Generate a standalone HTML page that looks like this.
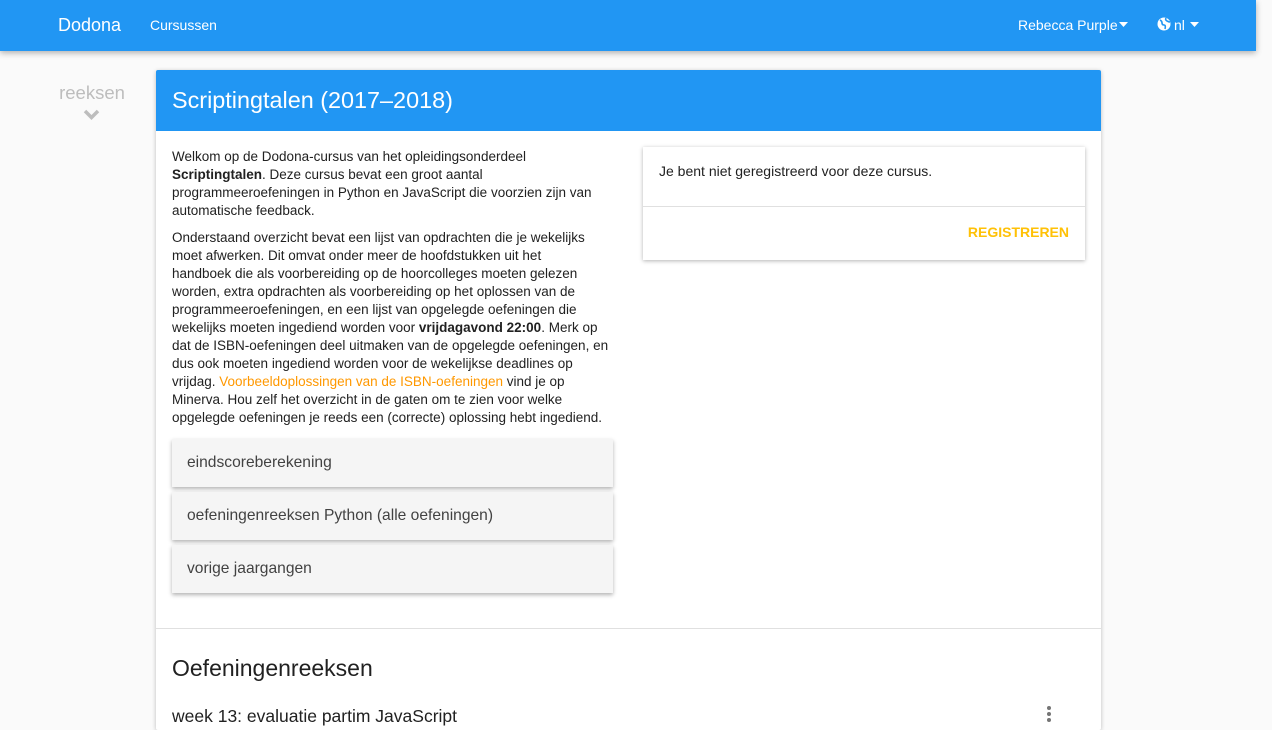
<!DOCTYPE html>
<html><head><meta charset="utf-8"><style>
*{box-sizing:border-box;margin:0;padding:0}
body{width:1272px;height:718px;overflow:hidden;background:#fafafa;font-family:"Liberation Sans",sans-serif;color:#212121;position:relative}
.nav{position:absolute;left:0;top:0;width:1256px;height:51px;background:#2196f3;box-shadow:0 2px 6px rgba(0,0,0,.3);color:#fff;z-index:2}
.nav span{position:absolute;top:0;line-height:50px}
.side{position:absolute;left:58px;top:82px;width:68px;text-align:center;color:#bdbdbd;font-size:18.5px}
.card{position:absolute;left:156px;top:70px;width:945px;height:660px;background:#fff;box-shadow:0 1px 4px rgba(0,0,0,.25);border-radius:2px}
.head{height:61px;background:#2196f3;color:#fff;font-size:23.4px;padding:17px 16px;border-radius:2px 2px 0 0}
.txt{position:absolute;left:16px;top:78px;width:450px;font-size:13.5px;line-height:18px;white-space:nowrap}
.txt p{margin-bottom:9px}
.txt b{font-weight:bold}
.org{color:#ff9800}
.lst{position:absolute;left:16px;width:441px;height:48px;background:#f5f5f5;box-shadow:0 2px 4px rgba(0,0,0,.3);font-size:15.6px;color:#424242;padding:15px 15px}
.reg{position:absolute;left:487px;top:77px;width:442px;height:113px;background:#fff;box-shadow:0 1px 4px rgba(0,0,0,.3);font-size:14px}
</style></head><body>
<div class="nav">
<span style="left:58px;font-size:18px">Dodona</span>
<span style="left:150px;font-size:14px">Cursussen</span>
<span style="left:1018px;font-size:14px">Rebecca Purple</span>
<svg style="position:absolute;left:1119px;top:22px" width="9" height="5"><path d="M0 0h9L4.5 5z" fill="#fff"/></svg>
<svg style="position:absolute;left:1157px;top:17px" width="14" height="14" viewBox="0 0 14 14"><circle cx="7" cy="7" r="6.5" fill="#fff"/><path d="M3 3q2 1 2 3t2 2 1 4M9 1q-1 2 1 3t3 1" stroke="#2196f3" stroke-width="1.6" fill="none"/></svg>
<span style="left:1174px;font-size:14px">nl</span>
<svg style="position:absolute;left:1190px;top:22px" width="9" height="5"><path d="M0 0h9L4.5 5z" fill="#fff"/></svg>
</div>
<div class="side">reeksen</div>
<svg style="position:absolute;left:83px;top:109px" width="17" height="11" viewBox="0 0 17 11"><path d="M2 2l6.5 6.5L15 2" stroke="#bdbdbd" stroke-width="3.5" fill="none"/></svg>
<div class="card">
<div class="head">Scriptingtalen (2017–2018)</div>
<div class="txt">
<p>Welkom op de Dodona-cursus van het opleidingsonderdeel<br><b>Scriptingtalen</b>. Deze cursus bevat een groot aantal<br>programmeeroefeningen in Python en JavaScript die voorzien zijn van<br>automatische feedback.</p>
<p>Onderstaand overzicht bevat een lijst van opdrachten die je wekelijks<br>moet afwerken. Dit omvat onder meer de hoofdstukken uit het<br>handboek die als voorbereiding op de hoorcolleges moeten gelezen<br>worden, extra opdrachten als voorbereiding op het oplossen van de<br>programmeeroefeningen, en een lijst van opgelegde oefeningen die<br>wekelijks moeten ingediend worden voor <b>vrijdagavond 22:00</b>. Merk op<br>dat de ISBN-oefeningen deel uitmaken van de opgelegde oefeningen, en<br>dus ook moeten ingediend worden voor de wekelijkse deadlines op<br>vrijdag. <span class="org">Voorbeeldoplossingen van de ISBN-oefeningen</span> vind je op<br>Minerva. Hou zelf het overzicht in de gaten om te zien voor welke<br>opgelegde oefeningen je reeds een (correcte) oplossing hebt ingediend.</p>
</div>
<div class="lst" style="top:369px">eindscoreberekening</div>
<div class="lst" style="top:422px">oefeningenreeksen Python (alle oefeningen)</div>
<div class="lst" style="top:475px">vorige jaargangen</div>
<div class="reg">
<div style="padding:16px 16px;height:60px;border-bottom:1px solid #e0e0e0">Je bent niet geregistreerd voor deze cursus.</div>
<div style="text-align:right;padding:17px 16px;color:#ffc107;font-weight:bold;font-size:14px">REGISTREREN</div>
</div>
<div style="position:absolute;left:0;top:558px;width:945px;border-top:1px solid #e0e0e0"></div>
<div style="position:absolute;left:16px;top:585px;font-size:23px;color:#212121">Oefeningenreeksen</div>
<div style="position:absolute;left:16px;top:636px;font-size:17.5px;color:#212121">week 13: evaluatie partim JavaScript</div>
<div style="position:absolute;left:891px;top:636px;width:4px;font-size:0">
<div style="width:4px;height:4px;border-radius:2px;background:#757575;margin-bottom:2px"></div><div style="width:4px;height:4px;border-radius:2px;background:#757575;margin-bottom:2px"></div><div style="width:4px;height:4px;border-radius:2px;background:#757575"></div></div>
</div>
</body></html>
